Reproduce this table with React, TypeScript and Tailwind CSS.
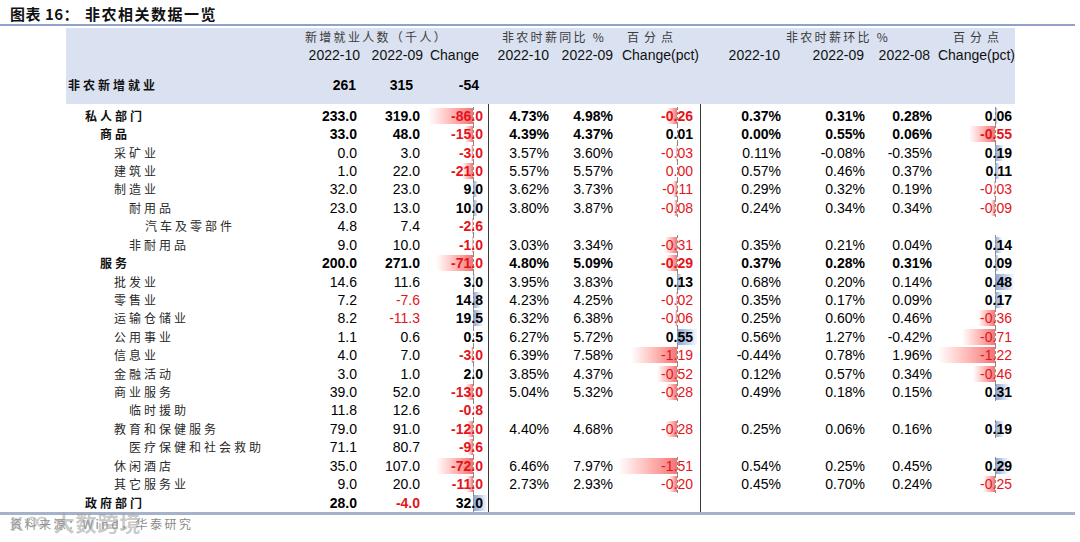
import React from "react";

type Row = { label: string; lvl: number; bold?: boolean; v: (string | null)[] };

const E = [null, null, null, null, null, null, null];

const rows: Row[] = [
  { label: "私人部门", lvl: 0, bold: true, v: ["233.0", "319.0", "-86.0", "4.73%", "4.98%", "-0.26", "0.37%", "0.31%", "0.28%", "0.06"] },
  { label: "商品", lvl: 1, bold: true, v: ["33.0", "48.0", "-15.0", "4.39%", "4.37%", "0.01", "0.00%", "0.55%", "0.06%", "-0.55"] },
  { label: "采矿业", lvl: 2, v: ["0.0", "3.0", "-3.0", "3.57%", "3.60%", "-0.03", "0.11%", "-0.08%", "-0.35%", "0.19"] },
  { label: "建筑业", lvl: 2, v: ["1.0", "22.0", "-21.0", "5.57%", "5.57%", "!0.00", "0.57%", "0.46%", "0.37%", "0.11"] },
  { label: "制造业", lvl: 2, v: ["32.0", "23.0", "9.0", "3.62%", "3.73%", "-0.11", "0.29%", "0.32%", "0.19%", "-0.03"] },
  { label: "耐用品", lvl: 3, v: ["23.0", "13.0", "10.0", "3.80%", "3.87%", "-0.08", "0.24%", "0.34%", "0.34%", "-0.09"] },
  { label: "汽车及零部件", lvl: 4, v: ["4.8", "7.4", "-2.6", ...E] },
  { label: "非耐用品", lvl: 3, v: ["9.0", "10.0", "-1.0", "3.03%", "3.34%", "-0.31", "0.35%", "0.21%", "0.04%", "0.14"] },
  { label: "服务", lvl: 1, bold: true, v: ["200.0", "271.0", "-71.0", "4.80%", "5.09%", "-0.29", "0.37%", "0.28%", "0.31%", "0.09"] },
  { label: "批发业", lvl: 2, v: ["14.6", "11.6", "3.0", "3.95%", "3.83%", "0.13", "0.68%", "0.20%", "0.14%", "0.48"] },
  { label: "零售业", lvl: 2, v: ["7.2", "-7.6", "14.8", "4.23%", "4.25%", "-0.02", "0.35%", "0.17%", "0.09%", "0.17"] },
  { label: "运输仓储业", lvl: 2, v: ["8.2", "-11.3", "19.5", "6.32%", "6.38%", "-0.06", "0.25%", "0.60%", "0.46%", "-0.36"] },
  { label: "公用事业", lvl: 2, v: ["1.1", "0.6", "0.5", "6.27%", "5.72%", "0.55", "0.56%", "1.27%", "-0.42%", "-0.71"] },
  { label: "信息业", lvl: 2, v: ["4.0", "7.0", "-3.0", "6.39%", "7.58%", "-1.19", "-0.44%", "0.78%", "1.96%", "-1.22"] },
  { label: "金融活动", lvl: 2, v: ["3.0", "1.0", "2.0", "3.85%", "4.37%", "-0.52", "0.12%", "0.57%", "0.34%", "-0.46"] },
  { label: "商业服务", lvl: 2, v: ["39.0", "52.0", "-13.0", "5.04%", "5.32%", "-0.28", "0.49%", "0.18%", "0.15%", "0.31"] },
  { label: "临时援助", lvl: 3, v: ["11.8", "12.6", "-0.8", ...E] },
  { label: "教育和保健服务", lvl: 2, v: ["79.0", "91.0", "-12.0", "4.40%", "4.68%", "-0.28", "0.25%", "0.06%", "0.16%", "0.19"] },
  { label: "医疗保健和社会救助", lvl: 3, v: ["71.1", "80.7", "-9.6", ...E] },
  { label: "休闲酒店", lvl: 2, v: ["35.0", "107.0", "-72.0", "6.46%", "7.97%", "-1.51", "0.54%", "0.25%", "0.45%", "0.29"] },
  { label: "其它服务业", lvl: 2, v: ["9.0", "20.0", "-11.0", "2.73%", "2.93%", "-0.20", "0.45%", "0.70%", "0.24%", "-0.25"] },
  { label: "政府部门", lvl: 0, bold: true, v: ["28.0", "-4.0", "32.0", ...E] },
];

const GRID = "grid grid-cols-[234px_60px_63px_65px_63px_64px_85px_83px_84px_67px_81px]";
const INDENT = ["pl-[19px]", "pl-[34px]", "pl-[48px]", "pl-[63px]", "pl-[79px]"];
const PADS = ["pr-[3px]", "pr-[3px]", "pr-[5px]", "pr-[2px]", "pr-[2px]", "pr-[7px]", "pr-[2px]", "pr-[2px]", "pr-[2px]", "pr-[3px]"];
const BARS: Record<number, { axis: number; scale: number; width: number; axisCls: string }> = {
  2: { axis: 50, scale: 0.52, width: 65, axisCls: "left-[50px]" },
  5: { axis: 62, scale: 39, width: 85, axisCls: "left-[62px]" },
  9: { axis: 61, scale: 47, width: 81, axisCls: "left-[61px]" },
};
const RED_COLS = [0, 1, 2, 5, 9];

function Cell({ raw, idx, rowBold }: { raw: string | null; idx: number; rowBold?: boolean }) {
  const border = idx === 3 || idx === 6;
  const base =
    "relative h-full flex items-center justify-end overflow-hidden " +
    PADS[idx] +
    (border ? " border-l border-[#3a3a3a]" : "");
  if (raw === null) return <div className={base} />;
  const forced = raw.startsWith("!");
  const text = forced ? raw.slice(1) : raw;
  const neg = text.startsWith("-");
  const num = parseFloat(text);
  const red = RED_COLS.includes(idx) && (neg || forced);
  let bold = !!rowBold;
  if (idx === 2) bold = true;
  if ((idx === 5 || idx === 9) && !neg && !forced) bold = true;
  const bar = BARS[idx];
  let barEl: React.ReactNode = null;
  if (bar) {
    const w = Math.abs(num) * bar.scale;
    if (w > 0.2) {
      if (num < 0) {
        barEl = (
          <div
            className="absolute top-1/2 -translate-y-1/2 h-[16px] bg-linear-to-l from-[#f27476] to-white"
            style={{ left: bar.axis - w, width: w }}
          />
        );
      } else {
        barEl = (
          <div
            className="absolute top-1/2 -translate-y-1/2 h-[16px] bg-linear-to-r from-[#87a2d4] to-white"
            style={{ left: bar.axis, width: Math.min(w, bar.width - bar.axis) }}
          />
        );
      }
    }
  }
  return (
    <div className={base}>
      {barEl}
      {bar && <div className={"absolute top-0 bottom-0 border-l border-dashed border-[#8a8a8a] " + bar.axisCls} />}
      <span
        className={
          "relative text-[14px] leading-none " +
          (bold ? "font-bold " : "font-normal ") +
          (red ? "text-[#e3141b]" : "text-black")
        }
      >
        {text}
      </span>
    </div>
  );
}

export default function App() {
  return (
    <div className="w-[1080px] h-[542px] bg-white overflow-hidden relative font-['Liberation_Sans',Arial,'Noto_Sans_CJK_SC',sans-serif] text-black">
      {/* Title */}
      <div className="h-[24px] pl-[10px] pt-[3px] flex items-center font-['Noto_Sans_CJK_SC',sans-serif] text-[15px] font-bold text-[#111] leading-none">
        <span className="tracking-[0.5px]">图表 16：</span>
        <span className="ml-[6px] tracking-[1.5px]">非农相关数据一览</span>
      </div>
      <div className="h-[2px] w-[1075px] bg-[#8fa3c8]" />

      <div className="mt-[2px] ml-[66px] w-[949px]">
        {/* Header */}
        <div className="bg-[#dae1f0] pb-[10px]">
          <div className={GRID + " h-[17px] items-center font-['Noto_Sans_CJK_SC',sans-serif] text-[12px] leading-none tracking-[2.3px] text-[#3c3c3c] whitespace-nowrap"}>
            <div />
            <div className="col-span-3 pl-[5px]">新增就业人数（千人）</div>
            <div className="col-span-2 pl-[14px]">非农时薪同比 %</div>
            <div className="pl-[12px] tracking-[5px]">百分点</div>
            <div className="col-span-3 pl-[86px]">非农时薪环比 %</div>
            <div className="pl-[19px] tracking-[5px]">百分点</div>
          </div>
          <div className={GRID + " h-[19px] items-center text-[14px] leading-none text-[#111] whitespace-nowrap"}>
            <div />
            <div className="text-right pr-0">2022-10</div>
            <div className="text-right pr-0">2022-09</div>
            <div className="text-right pr-[9px]">Change</div>
            <div className="text-right pr-[2px]">2022-10</div>
            <div className="text-right pr-[2px]">2022-09</div>
            <div className="text-right pr-[1px]">Change(pct)</div>
            <div className="text-right pr-[3px]">2022-10</div>
            <div className="text-right pr-[3px]">2022-09</div>
            <div className="text-right pr-[4px]">2022-08</div>
            <div className="text-right pr-0">Change(pct)</div>
          </div>
          <div className="h-[12px]" />
          <div className={GRID + " h-[18px] items-center leading-none whitespace-nowrap"}>
            <div className="pl-[2px] font-['Noto_Sans_CJK_SC',sans-serif] text-[12px] font-bold tracking-[3px] text-[#111]">
              非农新增就业
            </div>
            <div className="text-right pr-[4px] text-[14px] font-bold">261</div>
            <div className="text-right pr-[10px] text-[14px] font-bold">315</div>
            <div className="text-right pr-[9px] text-[14px] font-bold">-54</div>
          </div>
        </div>

        {/* Body */}
        <div className={GRID + " h-[2.5px]"}>
          <div />
          <div />
          <div />
          <div />
          <div className="border-l border-[#3a3a3a]" />
          <div />
          <div />
          <div className="border-l border-[#3a3a3a]" />
        </div>
        {rows.map((r) => (
          <div key={r.label} className={GRID + " h-[18.43px]"}>
            <div
              className={
                "h-full flex items-center whitespace-nowrap font-['Noto_Sans_CJK_SC',sans-serif] text-[12px] leading-none tracking-[3px] " +
                INDENT[r.lvl] +
                (r.bold ? " font-bold text-[#111]" : " font-normal text-[#2a2a2a]")
              }
            >
              {r.label}
            </div>
            {r.v.map((val, i) => (
              <Cell key={i} raw={val} idx={i} rowBold={r.bold} />
            ))}
          </div>
        ))}
      </div>

      {/* Bottom rule */}
      <div className="h-[3px] w-[1075px] bg-[#a6b2c8]" />

      {/* Source */}
      <div className="relative h-[18px] pl-[10px] flex items-center font-['Noto_Sans_CJK_SC',sans-serif] text-[12px] leading-none tracking-[2.5px] text-[#8a8a8a]">
        资料来源：Wind，华泰研究
        <div className="absolute left-[10px] top-[-3px] flex items-center gap-[2px] opacity-55">
          <span className="text-[19px] font-bold text-[#a0a0a0] leading-none">K</span>
          <svg width="22" height="14" viewBox="0 0 22 14" className="-ml-[2px]">
            <circle cx="6" cy="7" r="4.5" fill="none" stroke="#a8a8a8" strokeWidth="2" />
            <circle cx="16" cy="7" r="4.5" fill="none" stroke="#a8a8a8" strokeWidth="2" />
          </svg>
          <span className="ml-[4px] text-[21px] font-bold tracking-[1px] text-[#a0a0a0] leading-none">大数跨境</span>
        </div>
      </div>
    </div>
  );
}
